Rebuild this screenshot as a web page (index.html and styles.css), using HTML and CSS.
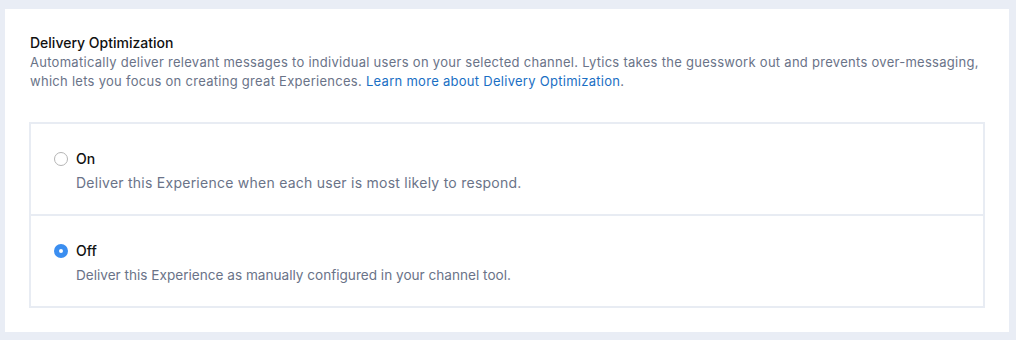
FILE: index.html
```html
<!DOCTYPE html>
<html lang="en">
  <head>
    <meta charset="UTF-8" />
    <title>Delivery Optimization</title>
    <link rel="stylesheet" href="styles.css">
  </head>
  <body>
    <div class="card">
      <div class="section-header">
        <h3>Delivery Optimization</h3>
        <p class="section-desc">
          Automatically deliver relevant messages to individual users on your selected channel. Lytics takes the guesswork out and prevents over-messaging, which lets you focus on creating great Experiences. <a href="#" class="link">Learn more about Delivery Optimization</a>.
        </p>
      </div>

      <div class="option-list">
        <label class="option">
          <span class="radio"></span>
          <span class="option-text">
            <span class="option-title">On</span>
            <span class="option-desc">Deliver this Experience when each user is most likely to respond.</span>
          </span>
        </label>
        <label class="option">
          <span class="radio checked"></span>
          <span class="option-text">
            <span class="option-title">Off</span>
            <span class="option-desc compact">Deliver this Experience as manually configured in your channel tool.</span>
          </span>
        </label>
      </div>
    </div>
  </body>
</html>
```

FILE: styles.css
```css
body {
  margin: 0;
  padding: 9px 7px 8px 5px;
  font-family: 'Inter', 'Liberation Sans', sans-serif;
  font-size: 13px;
  background-color: #e9edf5;
}

.card {
  background-color: white;
  padding: 25px 24px 24px 24px;
}

.section-header {
  padding: 0 0 0 1px;
  margin-bottom: 31px;
}

h3 {
  margin: 0 0 1px;
  font-size: 14px;
  font-weight: 500;
  line-height: 18px;
  color: #111;
}

.section-desc {
  margin: 0;
  line-height: 19px;
  letter-spacing: 0.28px;
  color: #6a7388;
}

.link {
  color: #1a6fc4;
  text-decoration: none;
}

.option-list {
  border: 2px solid #e8ecf3;
}

.option {
  display: flex;
  align-items: flex-start;
  padding: 25px 22px 21px 23px;
  cursor: pointer;
}

.option + .option {
  border-top: 2px solid #e8ecf3;
}

.radio {
  width: 14px;
  height: 14px;
  margin-top: 3px;
  margin-right: 8px;
  border: 1px solid #b5b5b5;
  border-radius: 50%;
  box-sizing: border-box;
  background-color: white;
  flex-shrink: 0;
}

.radio.checked {
  border: 5px solid #3b8ef0;
  background-color: white;
}

.option-text {
  display: flex;
  flex-direction: column;
  gap: 4px;
}

.option-title {
  font-size: 14px;
  font-weight: 500;
  line-height: 20px;
  color: #111;
}

.option-desc {
  font-size: 14px;
  line-height: 20px;
  letter-spacing: 0.25px;
  color: #6a7388;
}

.option-desc.compact {
  font-size: 13.6px;
  letter-spacing: 0;
}
```
